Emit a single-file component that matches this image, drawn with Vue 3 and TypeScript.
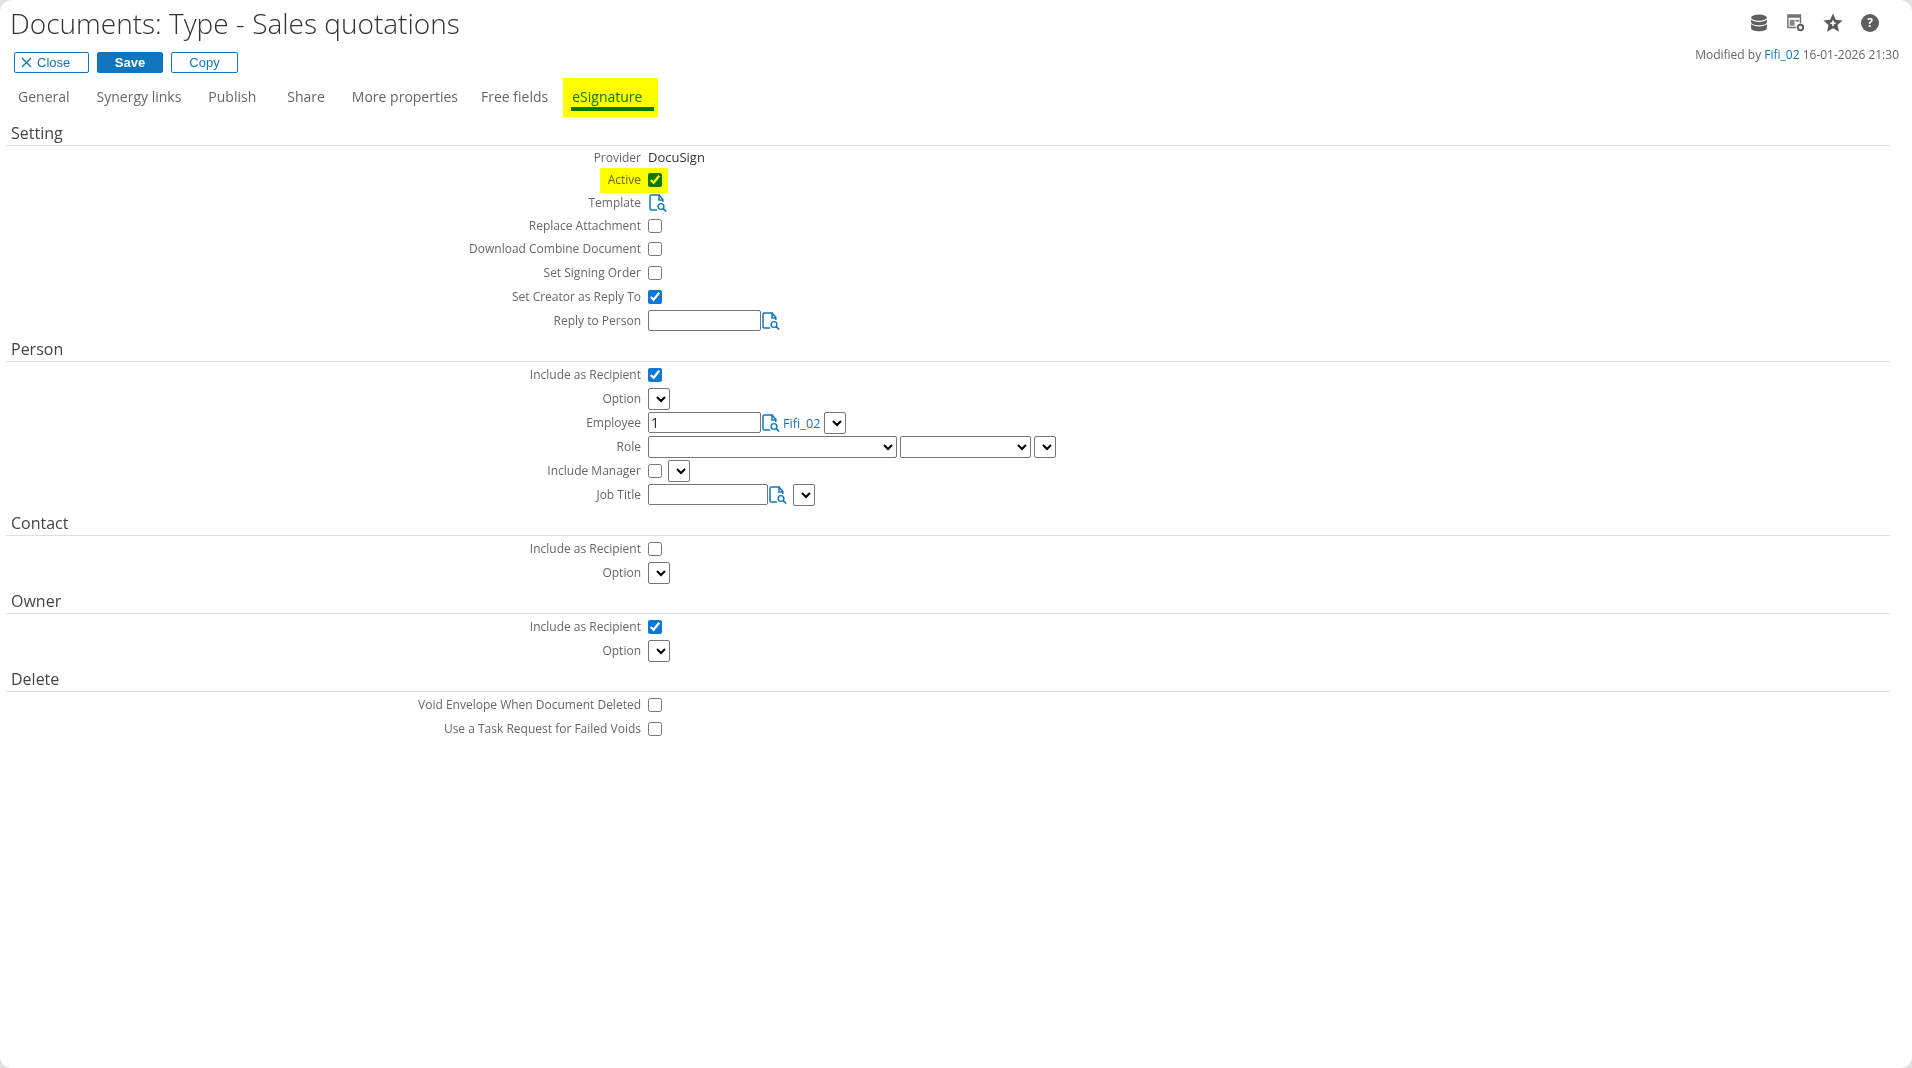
<script setup lang="ts">
interface Row {
  label: string
  kind: 'text' | 'check' | 'checked' | 'template' | 'reply' | 'select' | 'employee' | 'role' | 'manager' | 'job'
  mark?: boolean
  short?: boolean
}
interface Section {
  title: string
  rows: Row[]
}
const tabs = ['General', 'Synergy links', 'Publish', 'Share', 'More properties', 'Free fields', 'eSignature']
const sections: Section[] = [
  {
    title: 'Setting',
    rows: [
      { label: 'Provider', kind: 'text', short: true },
      { label: 'Active', kind: 'checked', mark: true, short: true },
      { label: 'Template', kind: 'template' },
      { label: 'Replace Attachment', kind: 'check', short: true },
      { label: 'Download Combine Document', kind: 'check' },
      { label: 'Set Signing Order', kind: 'check' },
      { label: 'Set Creator as Reply To', kind: 'checked' },
      { label: 'Reply to Person', kind: 'reply' },
    ],
  },
  {
    title: 'Person',
    rows: [
      { label: 'Include as Recipient', kind: 'checked' },
      { label: 'Option', kind: 'select' },
      { label: 'Employee', kind: 'employee' },
      { label: 'Role', kind: 'role' },
      { label: 'Include Manager', kind: 'manager' },
      { label: 'Job Title', kind: 'job' },
    ],
  },
  {
    title: 'Contact',
    rows: [
      { label: 'Include as Recipient', kind: 'check' },
      { label: 'Option', kind: 'select' },
    ],
  },
  {
    title: 'Owner',
    rows: [
      { label: 'Include as Recipient', kind: 'checked' },
      { label: 'Option', kind: 'select' },
    ],
  },
  {
    title: 'Delete',
    rows: [
      { label: 'Void Envelope When Document Deleted', kind: 'check' },
      { label: 'Use a Task Request for Failed Voids', kind: 'check' },
    ],
  },
]
</script>

<template>
  <div class="page">
    <header class="head">
      <div class="head-left">
        <h1 class="title">Documents: Type - Sales quotations</h1>
        <div class="buttons">
          <button class="btn btn-close" type="button">
            <svg width="11" height="11" viewBox="0 0 11 11"><path d="M1 1l9 9M10 1l-9 9" stroke="#0f75bc" stroke-width="1.4" fill="none" /></svg>
            Close
          </button>
          <button class="btn btn-save" type="button">Save</button>
          <button class="btn btn-copy" type="button">Copy</button>
        </div>
      </div>
      <div class="head-right">
        <div class="icons">
          <svg class="tool" viewBox="0 0 20 20">
            <ellipse cx="10" cy="4" rx="8.800" ry="3.400" fill="#5f5f5f" />
            <path d="M1.200 6.200v3c0 1.900 3.900 3.400 8.800 3.400s8.800-1.500 8.800-3.400v-3c-1.500 1.800-5 2.700-8.800 2.700s-7.300-.9-8.800-2.700z" fill="#5f5f5f" />
            <path d="M1.200 11.200v4.600c0 1.900 3.900 3.400 8.800 3.400s8.800-1.500 8.800-3.400v-4.600c-1.500 1.800-5 2.700-8.800 2.700s-7.300-.9-8.800-2.700z" fill="#5f5f5f" />
          </svg>
          <svg class="tool" viewBox="0 0 20 20">
            <path d="M1 1h14v14h-14z" fill="none" stroke="#707070" stroke-width="1.600" />
            <path d="M1 1h14v3.200h-14z" fill="#707070" />
            <path d="M3 6.500h5.500v6.500h-5.500zM9.500 6.500h4v2h-4z" fill="#8a8a8a" />
            <circle cx="15" cy="15" r="4.800" fill="#fff" />
            <circle cx="15" cy="15" r="3" fill="none" stroke="#5f5f5f" stroke-width="2.200" />
          </svg>
          <svg class="tool tool-star" viewBox="0 0 20 20">
            <path d="M10 .6l2.800 6.200 6.800.7-5.100 4.500 1.500 6.700L10 15.200l-6 3.500 1.500-6.700L.4 7.500l6.800-.7z" fill="#5a5a5a" />
            <path d="M10 7.500v5.400M7.300 10.200h5.400" stroke="#fff" stroke-width="1.600" />
          </svg>
          <span class="help">?</span>
        </div>
        <div class="modified">Modified by <a class="link">Fifi_02</a> 16-01-2026 21:30</div>
      </div>
    </header>

    <nav class="tabs">
      <a v-for="t in tabs" :key="t" class="tab" :class="{ 'tab-on': t === 'eSignature' }"><span class="tab-text">{{ t }}</span></a>
    </nav>

    <section v-for="s in sections" :key="s.title" class="section">
      <h2 class="section-title">{{ s.title }}</h2>
      <div v-for="(r, i) in s.rows" :key="i" class="row" :class="{ 'row-short': r.short }">
        <div class="label">{{ r.label }}</div>
        <div class="control">
          <span v-if="r.kind === 'text'" class="value">DocuSign</span>
          <input v-else-if="r.kind === 'check'" class="cb" type="checkbox" />
          <input v-else-if="r.kind === 'checked'" class="cb" type="checkbox" checked />
          <svg v-else-if="r.kind === 'template'" class="find" viewBox="0 0 18 18"><use href="#find-ico" /></svg>
          <template v-else-if="r.kind === 'reply'">
            <input class="inp inp-a" type="text" />
            <svg class="find" viewBox="0 0 18 18"><use href="#find-ico" /></svg>
          </template>
          <select v-else-if="r.kind === 'select'" class="sel sel-s"></select>
          <template v-else-if="r.kind === 'employee'">
            <input class="inp inp-a" type="text" value="1" />
            <svg class="find" viewBox="0 0 18 18"><use href="#find-ico" /></svg>
            <a class="link emp">Fifi_02</a>
            <select class="sel sel-s sel-emp"></select>
          </template>
          <template v-else-if="r.kind === 'role'">
            <select class="sel sel-l"></select>
            <select class="sel sel-m"></select>
            <select class="sel sel-s"></select>
          </template>
          <template v-else-if="r.kind === 'manager'">
            <input class="cb" type="checkbox" />
            <select class="sel sel-s sel-mgr"></select>
          </template>
          <template v-else-if="r.kind === 'job'">
            <input class="inp inp-b" type="text" />
            <svg class="find" viewBox="0 0 18 18"><use href="#find-ico" /></svg>
            <select class="sel sel-s sel-job"></select>
          </template>
        </div>
        <span v-if="r.mark" class="mark"></span>
      </div>
    </section>

    <svg class="defs" width="0" height="0">
      <defs>
        <g id="find-ico">
          <path d="M11 1H2.500A1.500 1.500 0 0 0 1 2.500v12A1.500 1.500 0 0 0 2.500 16H8M10 1.200V6h3.600M10 1l3.800 4.200V8" fill="none" stroke="#0f75bc" stroke-width="1.500" />
          <circle cx="12" cy="12.500" r="2.900" fill="none" stroke="#0f75bc" stroke-width="1.400" />
          <path d="M14.200 14.700l3 2.800" stroke="#0f75bc" stroke-width="1.700" />
        </g>
      </defs>
    </svg>
  </div>
</template>

<style>
html, body {
  margin: 0;
  background: #e2e2e2;
}
</style>

<style scoped>
.page {
  box-sizing: border-box;
  height: 1068px;
  background: #fff;
  border-radius: 12px;
  padding: 0 22px 0 6px;
  font-family: "Open Sans", sans-serif;
  color: #666;
  overflow: hidden;
}
.head {
  display: flex;
  justify-content: space-between;
  margin-right: -9px;
}
.head-left {
  padding-left: 4px;
}
.title {
  margin: 0;
  height: 52px;
  font-size: 28px;
  font-weight: 300;
  line-height: 47px;
  color: #333;
}
.buttons {
  display: flex;
  gap: 8px;
  padding-left: 4px;
}
.btn {
  box-sizing: border-box;
  height: 21px;
  display: flex;
  align-items: center;
  justify-content: center;
  gap: 5px;
  padding: 0;
  background: #fff;
  border: 1px solid #0f75bc;
  border-radius: 2px;
  color: #0f75bc;
  font-family: "Liberation Sans", sans-serif;
  font-size: 13px;
}
.btn-close {
  width: 75px;
  justify-content: flex-start;
  padding-left: 6px;
}
.btn-save {
  width: 66px;
  background: #0f75bc;
  color: #fff;
  font-weight: 700;
}
.btn-copy { width: 67px; }
.head-right {
  display: flex;
  flex-direction: column;
  align-items: flex-end;
}
.icons {
  display: flex;
  align-items: center;
  gap: 19px;
  height: 46px;
  padding-right: 20px;
}
.tool {
  width: 18px;
  height: 18px;
}
.tool-star {
  width: 20px;
  height: 20px;
  margin: 0 -1px;
}
.help {
  width: 18px;
  height: 18px;
  border-radius: 50%;
  background: #5f5f5f;
  color: #fff;
  font-size: 12px;
  font-weight: 700;
  line-height: 18px;
  text-align: center;
}
.modified {
  font-size: 12px;
  line-height: 17px;
  color: #666;
}
.link {
  color: #0f75bc;
}
.tabs {
  display: flex;
  margin-top: 5px;
  margin-bottom: -1px;
  padding-left: 12px;
  height: 39px;
}
.tab {
  display: flex;
  align-items: center;
  padding-bottom: 2px;
  box-sizing: border-box;
  font-size: 14px;
  color: #666;
  position: relative;
}
.tab:nth-child(1) { margin-right: 27px; }
.tab:nth-child(2) { margin-right: 27px; }
.tab:nth-child(3) { margin-right: 31px; }
.tab:nth-child(4) { margin-right: 27px; }
.tab:nth-child(5) { margin-right: 23px; }
.tab:nth-child(6) { margin-right: 15px; }
.tab-on {
  width: 95px;
  padding-left: 9px;
  color: #0f75bc;
}
.tab-on::before {
  content: "";
  position: absolute;
  left: 8px;
  right: 4px;
  top: 29px;
  height: 4px;
  background: #0f75bc;
}
.tab-on::after {
  content: "";
  position: absolute;
  inset: 0;
  background: #ffff00;
  mix-blend-mode: multiply;
}
.section-title {
  margin: 0;
  box-sizing: border-box;
  height: 30px;
  padding-left: 5px;
  font-size: 16px;
  font-weight: 400;
  line-height: 34px;
  color: #444;
  border-bottom: 1px solid #ddd;
}
.row {
  position: relative;
  box-sizing: border-box;
  display: grid;
  grid-template-columns: 635px 1fr;
  column-gap: 7px;
  align-items: center;
  height: 24px;
  padding-top: 2px;
}
.row-short {
  height: 22px;
}
.label {
  text-align: right;
  font-size: 12px;
  line-height: 16px;
  color: #666;
}
.row-short .label {
  padding-bottom: 1px;
}
.control {
  display: flex;
  align-items: center;
  height: 22px;
}
.row-short .control {
  height: 20px;
}
.value {
  font-size: 13px;
  line-height: 16px;
  padding-bottom: 2px;
  color: #333;
}
.cb {
  width: 14px;
  height: 14px;
  margin: 0;
  accent-color: #0f78d4;
}
.inp {
  box-sizing: border-box;
  height: 21px;
  margin-bottom: 1px;
  padding: 0 2px;
  border: 1px solid #767676;
  border-radius: 2px;
  font-family: "Open Sans", sans-serif;
  font-size: 14px;
  color: #222;
  outline: none;
}
.inp-a { width: 113px; }
.inp-b { width: 120px; }
.find {
  width: 18px;
  height: 18px;
  margin-left: 1px;
}
.emp {
  margin-left: 3px;
  font-size: 12.750px;
}
.sel {
  box-sizing: border-box;
  height: 22px;
  padding: 0;
  margin: 0;
  background: #fff;
  border: 1px solid #767676;
  border-radius: 2px;
  font-size: 12px;
}
.sel-s { width: 22px; }
.sel-m { width: 131px; margin-left: 3px; margin-right: 3px; }
.sel-l { width: 249px; }
.sel-emp { margin-left: 4px; }
.sel-mgr { margin-left: 6px; }
.sel-job { margin-left: 6px; }
.mark {
  position: absolute;
  left: 594px;
  top: 0;
  width: 68px;
  height: 25px;
  background: #ffff00;
  mix-blend-mode: multiply;
  pointer-events: none;
}
.defs {
  position: absolute;
}
</style>
